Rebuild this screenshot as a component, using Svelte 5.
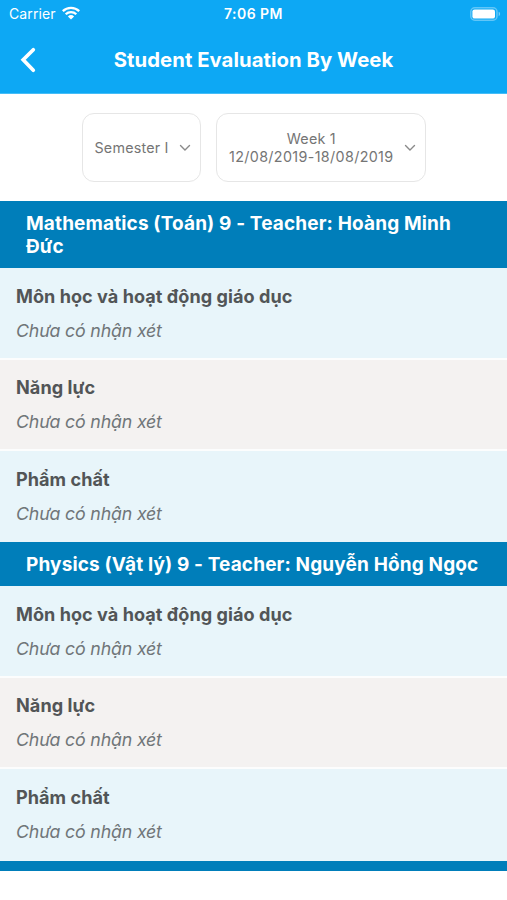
<script>
  const criteria = ['Môn học và hoạt động giáo dục', 'Năng lực', 'Phẩm chất'];
  const subjects = [
    'Mathematics (Toán) 9 - Teacher: Hoàng Minh Đức',
    'Physics (Vật lý) 9 - Teacher: Nguyễn Hồng Ngọc'
  ];
</script>

<div class="screen">
  <header>
    <div class="status">
      <div class="carrier">
        <span>Carrier</span>
        <svg width="18" height="14" viewBox="0 0 18 14" fill="none" stroke="#fff" stroke-width="2.3">
          <path d="M0.8 5.2a11.8 11.8 0 0 1 16.4 0" />
          <path d="M3.7 8.3a7.6 7.6 0 0 1 10.6 0" />
          <path d="M9 13.6 5.9 10.4a4.6 4.6 0 0 1 6.2 0z" fill="#fff" stroke="none" />
        </svg>
      </div>
      <span class="time">7:06 PM</span>
      <svg class="battery" width="31" height="14" viewBox="0 0 31 14">
        <rect x="0.8" y="0.8" width="26.2" height="12.4" rx="4" fill="none" stroke="#fff" stroke-opacity=".35" stroke-width="1.5" />
        <rect x="2.4" y="2.4" width="22.6" height="9.2" rx="2.2" fill="#fff" />
        <path d="M28.7 4.8a2.4 2.4 0 0 1 0 4.4z" fill="#fff" fill-opacity=".45" />
      </svg>
    </div>
    <div class="nav">
      <svg width="16" height="26" viewBox="0 0 16 26" fill="none" stroke="#fff" stroke-width="3.7" stroke-linecap="round" stroke-linejoin="miter">
        <path d="M13.3 2.8 3.2 12.8l10.1 10.4" />
      </svg>
      <h1>Student Evaluation By Week</h1>
    </div>
  </header>

  <div class="filters">
    <button class="semester">
      <span>Semester I</span>
      <svg width="12" height="8" viewBox="0 0 12 8"><path d="M1.5 1.5 6 6l4.5-4.5" /></svg>
    </button>
    <button class="week">
      <span>Week 1<br /><b>12/08/2019-18/08/2019</b></span>
      <svg width="12" height="8" viewBox="0 0 12 8"><path d="M1.5 1.5 6 6l4.5-4.5" /></svg>
    </button>
  </div>

  <main>
    {#each subjects as subject}
      <section>
        <h2>{subject}</h2>
        {#each criteria as name}
          <article>
            <h3>{name}</h3>
            <p>Chưa có nhận xét</p>
          </article>
        {/each}
      </section>
    {/each}
    <div class="end"></div>
  </main>
</div>

<style>
  :global(body) { background: #fff; }
  .screen {
    width: 507px;
    height: 900px;
    overflow: hidden;
    background: #fff;
    font-family: Inter, "Liberation Sans", sans-serif;
  }
  header { box-sizing: border-box; height: 94px; background: #0da8f4; color: #fff; border-bottom: 1px solid #45bdf7; }
  .status {
    height: 27px;
    padding: 0 6px 0 9px;
    display: grid;
    grid-template-columns: 1fr auto 1fr;
    align-items: center;
    font-size: 14px;
    line-height: 27px;
  }
  .carrier { display: flex; align-items: center; gap: 6px; letter-spacing: .12px; }
  .carrier svg { margin-top: -1px; }
  .time { font-weight: 600; letter-spacing: .45px; margin-right: 3px; }
  .battery { justify-self: end; }
  .nav { display: grid; grid-template-columns: 74px 1fr 74px; align-items: center; height: 66px; }
  .nav svg { margin-left: 20px; }
  h1, h2, h3, p { margin: 0; }
  h1 { font-size: 20.3px; line-height: 26px; font-weight: 650; letter-spacing: .05px; text-align: center; white-space: nowrap; }
  .filters { display: flex; justify-content: center; gap: 15px; height: 88px; padding: 19px 0 0 0; }
  button {
    box-sizing: border-box;
    height: 69px;
    display: flex;
    align-items: center;
    justify-content: space-between;
    border: 1.5px solid #e6e6e6;
    border-radius: 12px;
    background: #fff;
    color: #757575;
    font: 400 14.3px/17.5px Inter, sans-serif;
    letter-spacing: .2px;
    padding: 0 9px 0 12px;
    white-space: nowrap;
  }
  button b { font-weight: 400; letter-spacing: .36px; }
  button path { fill: none; stroke: #8a8a8a; stroke-width: 1.4; stroke-linecap: round; }
  .semester { width: 119.5px; }
  .week { width: 209.5px; }
  h2 {
    box-sizing: border-box;
    background: #007eba;
    color: #fff;
    font-size: 19px;
    line-height: 23px;
    font-weight: 650;
    letter-spacing: .14px;
    padding: 11px 26px 10px;
  }
  article {
    box-sizing: border-box;
    height: 92px;
    padding: 17px 16px 0;
    background: #e8f5fa;
    border-bottom: 2px solid #fcfdfd;
  }
  article:nth-of-type(2) { height: 91px; padding-top: 16px; background: #f4f2f1; }
  article:nth-of-type(3) { border-bottom: 0; }
  section:first-child article:nth-of-type(3) { height: 91px; }
  h3 { font-size: 18.1px; line-height: 23px; font-weight: 650; letter-spacing: .04px; color: #525557; }
  p { margin-top: 11px; font-size: 17.8px; line-height: 24px; letter-spacing: -.17px; font-style: italic; color: #707679; }
  .end { height: 10px; background: #007eba; }
</style>
